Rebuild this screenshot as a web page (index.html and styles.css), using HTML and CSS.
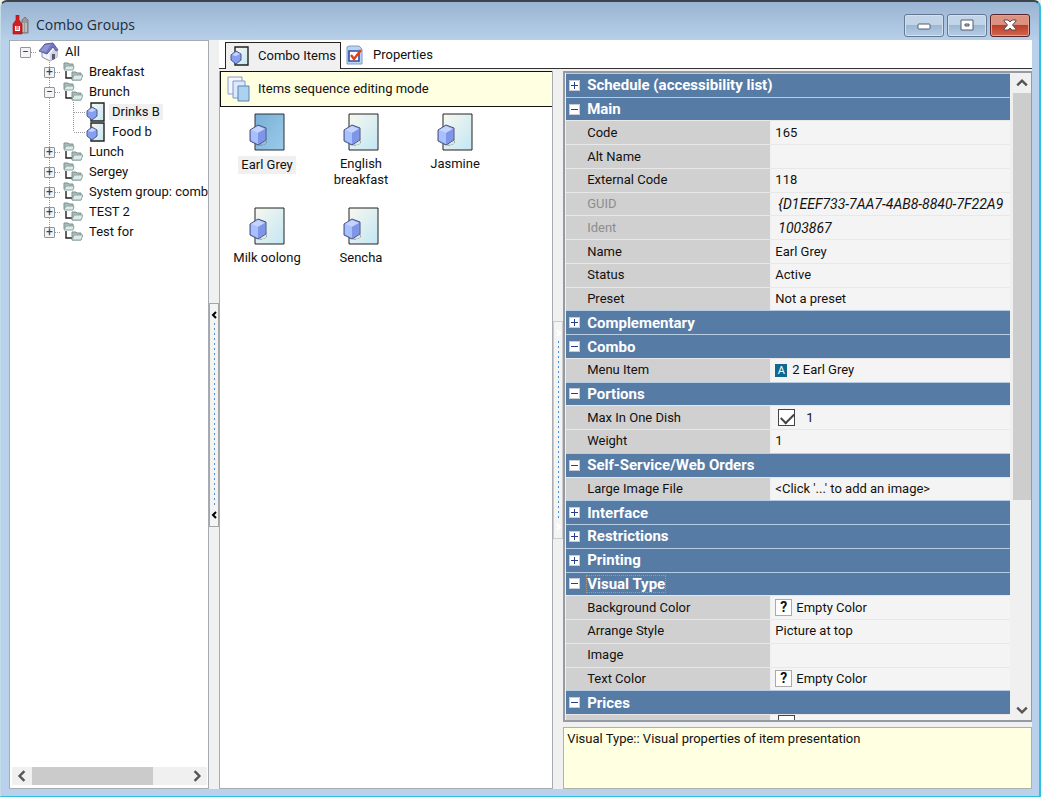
FILE: index.html
```html
<!DOCTYPE html>
<html lang="en">
<head>
  <meta charset="UTF-8">
  <meta name="viewport" content="width=device-width, initial-scale=1.0">
  <title>Combo Groups</title>
  <link rel="stylesheet" href="styles.css">
</head>
<body>
  <!-- icon sprites -->
  <svg class="sprites" aria-hidden="true">
    <defs>
      <linearGradient id="page-fill" x1="0" y1="0" x2="1" y2="1">
        <stop offset="0" stop-color="#f8f8ee"/>
        <stop offset="1" stop-color="#c2e6f4"/>
      </linearGradient>
      <linearGradient id="page-selected" x1="0" y1="0" x2="1" y2="1">
        <stop offset="0" stop-color="#78b0d6"/>
        <stop offset="1" stop-color="#9ccbea"/>
      </linearGradient>
    </defs>
    <symbol id="cube" viewBox="0 0 18 22">
      <path d="M6 20l10 1 2-6v4l-6 3z" fill="#777" opacity=".6"/>
      <path d="M1 6l8-5 8 3v12l-8 5-8-4z" fill="#8fa8f4" stroke="#4a5278"/>
      <path d="M2 6l7 3v11l-7-4z" fill="#a9c0ff"/>
      <path d="M2 6l7-4 7 3-7 4z" fill="#c4d4ff"/>
      <path d="M9 9l7-4v11l-7 4z" fill="#7f95e8"/>
    </symbol>
    <symbol id="item-small" viewBox="0 0 20 20">
      <path d="M5 1h13v18H5z" fill="url(#page-fill)" stroke="#222" stroke-width="1.4"/>
      <path d="M1 9l5-4 5 3v6l-5 4-5-4z" fill="#84a0ee" stroke="#4a5790"/>
      <path d="M2 9l4-3 4 2-4 2z" fill="#c8d6ff"/>
    </symbol>
    <symbol id="folders" viewBox="0 0 20 20">
      <path d="M3 9v7h6" fill="none" stroke="#222" stroke-width="1.4"/>
      <path d="M1 7V1h4l1 1h4v5z" fill="#a9bcb8" stroke="#7d928e"/>
      <path d="M1 8l2-4h8l-1 4z" fill="#dcecea" stroke="#8fa5a2"/>
      <path d="M9 18v-8h4l1 1h4v7z" fill="#a9bcb8" stroke="#7d928e"/>
      <path d="M9 18l2-5h9l-2 5z" fill="#dcecea" stroke="#8fa5a2"/>
    </symbol>
  </svg>

  <div class="window">
    <header class="titlebar">
      <svg class="app-icon" viewBox="0 0 18 20" aria-hidden="true">
        <path d="M10 5l3-3 3 3v13h-6z" fill="#999" stroke="#777"/>
        <path d="M11 8v9M14 8v9" stroke="#ddd"/>
        <path d="M4 0h3v5l3 4v10H1V9l3-4z" fill="#d51c20" stroke="#a60f12" stroke-width=".6"/>
        <path d="M3 11h5v5H3z" fill="#fff"/>
        <path d="M4 12h3M4 14h3" stroke="#d51c20"/>
      </svg>
      <h1 class="title">Combo Groups</h1>
      <div class="window-buttons">
        <button class="win-btn" aria-label="Minimize">
          <svg viewBox="0 0 14 12"><rect x="1" y="5" width="12" height="5" rx="1" fill="#fff" stroke="#555f6e"/></svg>
        </button>
        <button class="win-btn" aria-label="Maximize">
          <svg viewBox="0 0 14 12"><path d="M1 1h12v10H1z" fill="#fff" stroke="#555f6e"/><path d="M5 5h4v2H5z" fill="#9fb4cd" stroke="#555f6e"/></svg>
        </button>
        <button class="win-btn close" aria-label="Close">
          <svg viewBox="0 0 14 12"><path d="M1 1h4l2 2 2-2h4v1L9.500 6 13 10v1H9L7 9l-2 2H1v-1l3.500-4L1 2z" fill="#fff" stroke="#5d4a50"/></svg>
        </button>
      </div>
    </header>

    <main class="client">
      <nav class="tree-panel" aria-label="Groups">
        <div class="tree-scroll">
          <ul class="tree">
            <li>
              <div class="node root">
                <button class="expander" aria-label="Collapse">&minus;</button><i class="dots"></i>
                <svg class="node-icon" viewBox="0 0 20 20" aria-hidden="true">
                  <path d="M3 9v6l8 4 7-4V8l-5-4z" fill="#f3f3fa" stroke="#8a8aa8"/>
                  <path d="M11 12v7l7-4V9l-3-2z" fill="#d3d3e2"/>
                  <path d="M0 9l6-7 8-1 5 7-2 1-3-4-6 7z" fill="#7277bb" stroke="#595e9b"/>
                  <path d="M1 9l5-6 6-1-5 8z" fill="#8f96d4"/>
                  <path d="M13 12h3v5l-3 1z" fill="#555b76"/>
                </svg>
                <span class="node-label">All</span>
              </div>
              <ul class="branch">
                <li><div class="node"><button class="expander" aria-label="Expand">+</button><i class="dots"></i><svg class="node-icon"><use href="#folders"/></svg><span class="node-label">Breakfast</span></div></li>
                <li>
                  <div class="node"><button class="expander" aria-label="Collapse">&minus;</button><i class="dots"></i><svg class="node-icon"><use href="#folders"/></svg><span class="node-label">Brunch</span></div>
                  <ul class="leaves">
                    <li><div class="node"><i class="dots long"></i><svg class="node-icon"><use href="#item-small"/></svg><span class="node-label selected">Drinks B</span></div></li>
                    <li><div class="node"><i class="dots long"></i><svg class="node-icon"><use href="#item-small"/></svg><span class="node-label">Food b</span></div></li>
                  </ul>
                </li>
                <li><div class="node"><button class="expander" aria-label="Expand">+</button><i class="dots"></i><svg class="node-icon"><use href="#folders"/></svg><span class="node-label">Lunch</span></div></li>
                <li><div class="node"><button class="expander" aria-label="Expand">+</button><i class="dots"></i><svg class="node-icon"><use href="#folders"/></svg><span class="node-label">Sergey</span></div></li>
                <li><div class="node"><button class="expander" aria-label="Expand">+</button><i class="dots"></i><svg class="node-icon"><use href="#folders"/></svg><span class="node-label">System group: comb</span></div></li>
                <li><div class="node"><button class="expander" aria-label="Expand">+</button><i class="dots"></i><svg class="node-icon"><use href="#folders"/></svg><span class="node-label">TEST 2</span></div></li>
                <li><div class="node"><button class="expander" aria-label="Expand">+</button><i class="dots"></i><svg class="node-icon"><use href="#folders"/></svg><span class="node-label">Test for</span></div></li>
              </ul>
            </li>
          </ul>
        </div>
        <div class="hscroll">
          <button class="scroll-btn" aria-label="Scroll left"><svg viewBox="0 0 10 10"><path d="M7 1L3 5l4 4"/></svg></button>
          <div class="htrack"><div class="hthumb"></div></div>
          <button class="scroll-btn" aria-label="Scroll right"><svg viewBox="0 0 10 10"><path d="M3 1l4 4-4 4"/></svg></button>
        </div>
      </nav>

      <div class="splitter">
        <button class="grip" aria-label="Hide tree">
          <svg viewBox="0 0 6 8"><path d="M5 1L2 4l3 3"/></svg>
          <i class="grip-dots"></i>
          <svg viewBox="0 0 6 8"><path d="M5 1L2 4l3 3"/></svg>
        </button>
      </div>

      <section class="content">
        <div class="tabs" role="tablist">
          <button class="tab active" role="tab" aria-selected="true"><svg class="tab-icon"><use href="#item-small"/></svg>Combo Items</button>
          <button class="tab" role="tab" aria-selected="false">
            <svg class="tab-icon" viewBox="0 0 20 20" aria-hidden="true">
              <path d="M2 2l2-1h10l3 3v15H2z" fill="#b9d4f2" stroke="#7e9cc8"/>
              <path d="M4 6h10v10H4z" fill="#fff" stroke="#2c4f9e" stroke-width="1.600"/>
              <path d="M6 10l3 4 7-9" fill="none" stroke="#e2401c" stroke-width="2.400"/>
            </svg>Properties</button>
        </div>

        <div class="panes">
          <div class="items-pane">
            <button class="mode-bar">
              <svg class="mode-icon" viewBox="0 0 24 26" aria-hidden="true">
                <path d="M1 1h14v17H1z" fill="#f4f6ff" stroke="#8a9ccb"/>
                <path d="M6 5h12v17H6z" fill="#dbe9fb" stroke="#7f97cc"/>
                <path d="M11 10h11v15H11z" fill="#a9d3ee" stroke="#5f80b4"/>
              </svg>Items sequence editing mode</button>
            <ul class="items">
              <li class="item selected"><svg class="item-icon" viewBox="0 0 36 38"><path d="M6 1h29v36H6z" fill="url(#page-selected)" stroke="#26323c"/><use href="#cube" x="0" y="11" width="18" height="22"/></svg><span>Earl Grey</span></li>
              <li class="item"><svg class="item-icon" viewBox="0 0 36 38"><path d="M6 1h29v36H6z" fill="url(#page-fill)" stroke="#222"/><use href="#cube" x="0" y="11" width="18" height="22"/></svg><span>English<br>breakfast</span></li>
              <li class="item"><svg class="item-icon" viewBox="0 0 36 38"><path d="M6 1h29v36H6z" fill="url(#page-fill)" stroke="#222"/><use href="#cube" x="0" y="11" width="18" height="22"/></svg><span>Jasmine</span></li>
              <li class="item"><svg class="item-icon" viewBox="0 0 36 38"><path d="M6 1h29v36H6z" fill="url(#page-fill)" stroke="#222"/><use href="#cube" x="0" y="11" width="18" height="22"/></svg><span>Milk oolong</span></li>
              <li class="item"><svg class="item-icon" viewBox="0 0 36 38"><path d="M6 1h29v36H6z" fill="url(#page-fill)" stroke="#222"/><use href="#cube" x="0" y="11" width="18" height="22"/></svg><span>Sencha</span></li>
            </ul>
          </div>

          <div class="splitter">
            <button class="grip faded" aria-label="Hide properties">
              <svg viewBox="0 0 6 8"><path d="M2 1l3 3-3 3"/></svg>
              <i class="grip-dots"></i>
              <svg viewBox="0 0 6 8"><path d="M2 1l3 3-3 3"/></svg>
            </button>
          </div>

          <div class="props-pane">
            <div class="inspector">
              <table class="props">
                <tbody>
                  <tr class="group"><th colspan="2"><button class="group-btn"><i class="box plus"></i><span>Schedule (accessibility list)</span></button></th></tr>
                  <tr class="group"><th colspan="2"><button class="group-btn"><i class="box"></i><span>Main</span></button></th></tr>
                  <tr><th>Code</th><td>165</td></tr>
                  <tr><th>Alt Name</th><td></td></tr>
                  <tr><th>External Code</th><td>118</td></tr>
                  <tr class="readonly"><th>GUID</th><td>{D1EEF733-7AA7-4AB8-8840-7F22A9</td></tr>
                  <tr class="readonly"><th>Ident</th><td>1003867</td></tr>
                  <tr><th>Name</th><td>Earl Grey</td></tr>
                  <tr><th>Status</th><td>Active</td></tr>
                  <tr><th>Preset</th><td>Not a preset</td></tr>
                  <tr class="group"><th colspan="2"><button class="group-btn"><i class="box plus"></i><span>Complementary</span></button></th></tr>
                  <tr class="group"><th colspan="2"><button class="group-btn"><i class="box"></i><span>Combo</span></button></th></tr>
                  <tr><th>Menu Item</th><td><b class="badge">A</b>2 Earl Grey</td></tr>
                  <tr class="group"><th colspan="2"><button class="group-btn"><i class="box"></i><span>Portions</span></button></th></tr>
                  <tr><th><label for="max-dish">Max In One Dish</label></th><td><input class="check" id="max-dish" type="checkbox" checked>1</td></tr>
                  <tr><th>Weight</th><td>1</td></tr>
                  <tr class="group"><th colspan="2"><button class="group-btn"><i class="box"></i><span>Self-Service/Web Orders</span></button></th></tr>
                  <tr><th>Large Image File</th><td>&lt;Click '...' to add an image&gt;</td></tr>
                  <tr class="group"><th colspan="2"><button class="group-btn"><i class="box plus"></i><span>Interface</span></button></th></tr>
                  <tr class="group"><th colspan="2"><button class="group-btn"><i class="box plus"></i><span>Restrictions</span></button></th></tr>
                  <tr class="group"><th colspan="2"><button class="group-btn"><i class="box plus"></i><span>Printing</span></button></th></tr>
                  <tr class="group focused"><th colspan="2"><button class="group-btn"><i class="box"></i><span>Visual Type</span></button></th></tr>
                  <tr><th>Background Color</th><td><b class="swatch">?</b>Empty Color</td></tr>
                  <tr><th>Arrange Style</th><td>Picture at top</td></tr>
                  <tr><th>Image</th><td></td></tr>
                  <tr><th>Text Color</th><td><b class="swatch">?</b>Empty Color</td></tr>
                  <tr class="group"><th colspan="2"><button class="group-btn"><i class="box"></i><span>Prices</span></button></th></tr>
                  <tr class="cut"><th></th><td><input class="check" type="checkbox" aria-label="Price"></td></tr>
                </tbody>
              </table>
              <div class="vscroll">
                <button class="scroll-btn" aria-label="Scroll up"><svg viewBox="0 0 10 10"><path d="M1 7l4-4 4 4"/></svg></button>
                <div class="vtrack"><div class="vthumb"></div></div>
                <button class="scroll-btn" aria-label="Scroll down"><svg viewBox="0 0 10 10"><path d="M1 3l4 4 4-4"/></svg></button>
              </div>
            </div>
            <p class="hint">Visual Type:: Visual properties of item presentation</p>
          </div>
        </div>
      </section>
    </main>
  </div>
</body>
</html>
```
FILE: styles.css
```css
* {
  box-sizing: border-box;
}

body, html {
  margin: 0;
  padding: 0;
  height: 100%;
  background-color: #edf0e6;
  font-family: Roboto, "Liberation Sans", Arial, sans-serif;
  font-size: 13px;
  line-height: 16px;
  color: #111;
}

ul {
  list-style: none;
  margin: 0;
  padding: 0;
}

button {
  font: inherit;
  color: inherit;
  padding: 0;
  margin: 0;
  border: none;
  background: none;
}

.sprites {
  position: absolute;
  width: 0;
  height: 0;
}

/* window frame */
.window {
  display: flex;
  flex-direction: column;
  height: 100vh;
  padding: 0 7px 7px 8px;
  background: linear-gradient(#99b4d2 0, #b9d1ea 40px);
  border: 1px solid #2fc0e0;
  border-width: 2px 2px 1px 1px;
  border-top-color: #3b434b;
  border-left-color: #c5dcea;
  border-radius: 7px 7px 0 0;
}

.titlebar {
  display: flex;
  flex: none;
  align-items: center;
  height: 38px;
  padding: 8px 2px 0 3px;
}

.app-icon {
  width: 18px;
  height: 20px;
}

.title {
  flex: 1;
  margin: 0 0 0 6px;
  font: 14px/20px "Open Sans", "Noto Sans", sans-serif;
  color: #222c38;
}

.window-buttons {
  display: flex;
  gap: 3px;
}

.win-btn {
  display: flex;
  align-items: center;
  justify-content: center;
  width: 40px;
  height: 23px;
  border: 1px solid #66788f;
  border-radius: 3px;
  box-shadow: inset 0 0 0 1px #d3e1f0;
  background: linear-gradient(#c2d4e8 45%, #9db7d4 50%, #b4cce6);
}

.win-btn svg {
  width: 14px;
  height: 12px;
}

.win-btn.close {
  border-color: #58222a;
  box-shadow: inset 0 0 0 1px #e3a196;
  background: linear-gradient(#dc9181 45%, #bd3f29 50%, #cf6650);
}

.client {
  display: flex;
  flex: 1;
  min-height: 0;
  background-color: #f0f0f0;
}

/* tree */
.tree-panel {
  display: flex;
  flex-direction: column;
  flex: none;
  width: 200px;
  border: 1px solid #a7abb2;
  background-color: #fff;
}

.tree-scroll {
  flex: 1;
  overflow: hidden;
  padding-top: 1px;
}

.tree {
  padding-left: 10px;
}

.branch {
  padding-left: 24px;
  background: repeating-linear-gradient(#999 0 1px, transparent 1px 2px) 29px 0 / 1px 171px no-repeat;
}

.leaves {
  padding-left: 30px;
  background: repeating-linear-gradient(#999 0 1px, transparent 1px 2px) 29px 0 / 1px 30px no-repeat;
}

.node {
  display: flex;
  align-items: center;
  height: 20px;
  white-space: nowrap;
}

.expander {
  width: 11px;
  height: 11px;
  flex: none;
  border: 1px solid #92969c;
  border-radius: 1px;
  background-color: #f4f4f6;
  color: #27408b;
  font-size: 12px;
  line-height: 8px;
}

.dots {
  flex: none;
  width: 6px;
  height: 1px;
  margin-right: 2px;
  background: repeating-linear-gradient(90deg, #999 0 1px, transparent 1px 2px);
}

.dots.long {
  width: 12px;
  margin: 0;
}

.node-icon {
  flex: none;
  width: 20px;
  height: 20px;
}

.node-label {
  padding: 0 3px;
  margin-left: 3px;
}

.selected.node-label {
  background-color: #f0f0f0;
}

/* scrollbars */
.scroll-btn {
  display: flex;
  align-items: center;
  justify-content: center;
  flex: none;
  width: 20px;
  height: 18px;
}

.scroll-btn svg {
  width: 12px;
  height: 12px;
  fill: none;
  stroke: #555;
  stroke-width: 2;
}

.hscroll {
  display: flex;
  margin: 0 1px 3px 2px;
  background-color: #f0f0f0;
}

.htrack {
  flex: 1;
}

.hthumb {
  width: 78%;
  height: 18px;
  background-color: #cbcbcb;
}

.vscroll {
  display: flex;
  flex-direction: column;
  flex: none;
  width: 18px;
  background-color: #f0f0f0;
}

.vscroll .scroll-btn {
  width: 18px;
  height: 20px;
}

.vtrack {
  flex: 1;
}

.vthumb {
  height: 67%;
  background-color: #cdcdcd;
}

/* splitters */
.splitter {
  display: flex;
  align-items: center;
  flex: none;
  width: 10px;
}

.grip {
  display: flex;
  flex-direction: column;
  align-items: center;
  justify-content: space-between;
  width: 10px;
  height: 224px;
  padding: 6px 0;
  border: 1px solid #a5a5a5;
  background-color: #f4f4f4;
}

.grip svg {
  width: 6px;
  height: 10px;
  fill: none;
  stroke: #000;
  stroke-width: 2;
}

.grip-dots {
  flex: 1;
  width: 1px;
  margin: 3px 0;
  background: repeating-linear-gradient(#4a90d0 0 2px, transparent 2px 5px);
}

.grip.faded {
  height: 218px;
  border-color: #ccc;
}

.grip.faded svg {
  stroke: #fff;
}

/* tabs */
.content {
  display: flex;
  flex-direction: column;
  flex: 1;
  min-width: 0;
}

.tabs {
  display: flex;
  flex: none;
  height: 29px;
  padding: 2px 0 0 6px;
  background-color: #fff;
  border-bottom: 1px solid #333;
}

.tab {
  display: flex;
  align-items: center;
  padding: 0 4px;
}

.tab.active {
  height: 27px;
  border: 1px solid #222;
  border-bottom: none;
  background-color: #f0f0f0;
}

.tab-icon {
  width: 20px;
  height: 20px;
  margin-right: 8px;
}

.panes {
  display: flex;
  flex: 1;
  min-height: 0;
  padding-top: 2px;
}

/* items */
.items-pane {
  display: flex;
  flex-direction: column;
  flex: 333;
  min-width: 0;
  border: 1px solid #a7abb2;
  border-top: none;
  background-color: #fff;
}

.mode-bar {
  display: flex;
  align-items: center;
  flex: none;
  height: 36px;
  padding: 0 6px;
  border: 1px solid #111;
  border-width: 1px 0 1px 1px;
  background-color: #ffffe1;
}

.mode-icon {
  width: 24px;
  height: 26px;
  margin-right: 7px;
}

.items {
  display: grid;
  grid-template-columns: repeat(auto-fill, 94px);
  grid-auto-rows: 94px;
  padding-top: 6px;
}

.item {
  display: flex;
  flex-direction: column;
  align-items: center;
  text-align: center;
}

.item-icon {
  width: 36px;
  height: 38px;
  margin-bottom: 5px;
}

.item span {
  padding: 0 3px;
}

.item.selected span {
  padding: 1px 3px;
  background-color: #f0f0f0;
}

/* property inspector */
.props-pane {
  display: flex;
  flex-direction: column;
  gap: 5px;
  flex: 470;
  min-width: 0;
}

.inspector {
  display: flex;
  flex: 1;
  min-height: 0;
  gap: 3px;
  padding-left: 1px;
  border: 2px solid #959ba5;
  border-right-width: 1px;
}

.props {
  flex: 1;
  display: flex;
  min-width: 0;
}

.props tbody {
  display: grid;
  grid-template-rows: repeat(27, 1fr) 6px;
  flex: 1;
  min-width: 0;
}

.props tr {
  display: grid;
  grid-template-columns: 46% 1fr;
  gap: 1px;
  min-height: 0;
  border-top: 1px solid #e8e8e8;
}

.props th, .props td {
  display: flex;
  align-items: center;
  min-width: 0;
  min-height: 0;
  padding: 0;
  overflow: hidden;
  white-space: nowrap;
  font-weight: normal;
  text-align: left;
}

.props th {
  padding-left: 21px;
  background-color: #d0d0d0;
}

.props td {
  padding-left: 4px;
  background-color: #f4f4f4;
}

.props .group {
  grid-template-columns: 1fr;
  border-top-color: #b4cce4;
}

.props .group th {
  padding: 0;
  background-color: #567ca6;
}

.group-btn {
  display: flex;
  align-items: center;
  width: 100%;
  padding-left: 3px;
  color: #fff;
  font-weight: bold;
  font-size: 15px;
}

.group-btn span {
  margin-left: 6px;
  border: 1px solid transparent;
}

.focused .group-btn span {
  border: 1px dotted #a99983;
}

.box {
  width: 11px;
  height: 11px;
  border: 1px solid #c9c9cf;
  background: linear-gradient(#27408b, #27408b) center / 7px 1px no-repeat #fff;
}

.box.plus {
  background: linear-gradient(#27408b, #27408b) center / 7px 1px no-repeat, linear-gradient(#27408b, #27408b) center / 1px 7px no-repeat #fff;
}

.readonly th {
  color: #8d8d8d;
}

.props .readonly td {
  padding-left: 7px;
  font-size: 14px;
  font-style: italic;
}

.badge {
  width: 12px;
  height: 13px;
  margin-right: 5px;
  background-color: #11688f;
  color: #fff;
  font-size: 11px;
  line-height: 13px;
  font-weight: normal;
  text-align: center;
}

.check {
  appearance: none;
  flex: none;
  width: 17px;
  height: 17px;
  margin: 0 11px 0 3px;
  border: 1px solid #444;
  background-color: #fff;
}

.check:checked::before {
  content: "";
  display: block;
  width: 11px;
  height: 6px;
  margin: 3px 2px;
  border: solid #444;
  border-width: 0 0 2px 2px;
  transform: rotate(-45deg);
}

.swatch {
  width: 17px;
  height: 17px;
  margin-right: 4px;
  border: 1px solid #aaa;
  background-color: #fff;
  font-size: 14px;
  line-height: 15px;
  text-align: center;
}

.cut td {
  align-items: flex-start;
}

.hint {
  flex: none;
  height: 62px;
  margin: 0;
  padding: 3px;
  border: 1px solid #b0b0a8;
  background-color: #ffffe1;
}
```
